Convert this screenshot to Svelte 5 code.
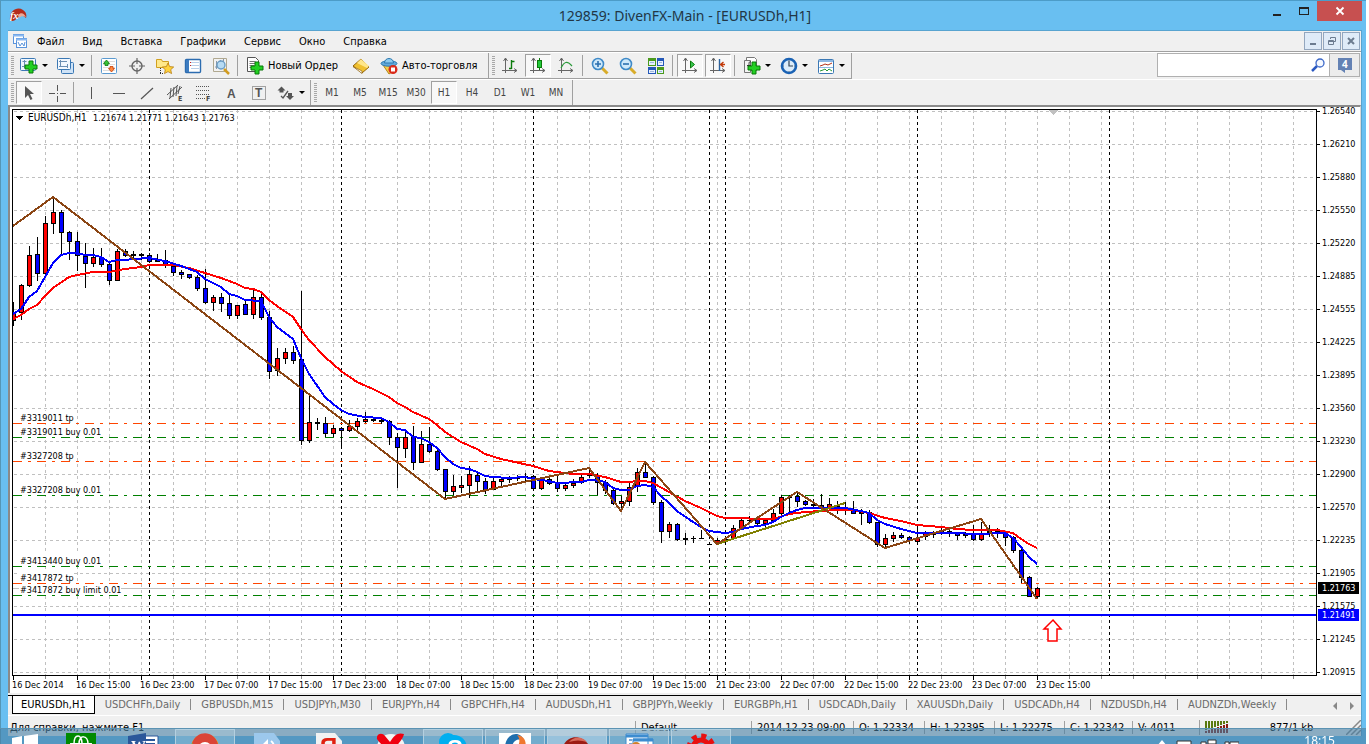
<script>
	let chartWidth = $state(1350)
	let chartHeight = $state(586)
	let search = $state('')
	let activeTab = $state(0)
	let period = $state('H1')

	const menus = ['Файл', 'Вид', 'Вставка', 'Графики', 'Сервис', 'Окно', 'Справка']
	const periods = ['M1', 'M5', 'M15', 'M30', 'H1', 'H4', 'D1', 'W1', 'MN']

	const tabs = [
		'EURUSDh,H1', 'USDCHFh,Daily', 'GBPUSDh,M15', 'USDJPYh,M30', 'EURJPYh,H4',
		'GBPCHFh,H4', 'AUDUSDh,H1', 'GBPJPYh,Weekly', 'EURGBPh,H1', 'USDCADh,Daily',
		'XAUUSDh,Daily', 'USDCADh,H4', 'NZDUSDh,H4', 'AUDNZDh,Weekly'
	]

	const prices = [
		'1.26540', '1.26210', '1.25880', '1.25550', '1.25220', '1.24885', '1.24555', '1.24225', '1.23895',
		'1.23560', '1.23230', '1.22900', '1.22570', '1.22235', '1.21905', '1.21575', '1.21245', '1.20915'
	]

	const times = [
		'16 Dec 2014', '16 Dec 15:00', '16 Dec 23:00', '17 Dec 07:00', '17 Dec 15:00', '17 Dec 23:00',
		'18 Dec 07:00', '18 Dec 15:00', '18 Dec 23:00', '19 Dec 07:00', '19 Dec 15:00', '21 Dec 23:00',
		'22 Dec 07:00', '22 Dec 15:00', '22 Dec 23:00', '23 Dec 07:00', '23 Dec 15:00'
	]

	const days = [149, 341, 533, 709, 725, 917, 1109]

	const orders = [
		{ y: 423, text: '#3319011 tp', kind: 'tp', w: 54 },
		{ y: 437, text: '#3319011 buy 0.01', kind: 'buy', w: 82 },
		{ y: 461, text: '#3327208 tp', kind: 'tp', w: 54 },
		{ y: 495, text: '#3327208 buy 0.01', kind: 'buy', w: 82 },
		{ y: 566, text: '#3413440 buy 0.01', kind: 'buy', w: 82 },
		{ y: 583, text: '#3417872 tp', kind: 'tp', w: 54 },
		{ y: 595, text: '#3417872 buy limit 0.01', kind: 'buy', w: 102 }
	]

	// one bar every 8px: high, low, body top, body bottom, up
	const bars = [
		[302, 326, 313, 321, 1], [284, 320, 285, 313, 1], [246, 287, 255, 286, 1], [237, 281, 254, 274, 0],
		[216, 274, 223, 274, 1], [197, 234, 212, 224, 1], [210, 256, 212, 233, 0], [231, 260, 232, 242, 0],
		[232, 271, 241, 256, 0], [243, 288, 256, 264, 0], [248, 267, 257, 264, 1], [248, 267, 257, 265, 0],
		[263, 285, 264, 281, 0], [249, 281, 251, 281, 1], [249, 257, 251, 256, 0], [251, 259, 254, 256, 0],
		[253, 260, 254, 256, 0], [253, 262, 255, 262, 0], [254, 262, 260, 262, 0], [250, 268, 260, 265, 0],
		[265, 276, 266, 273, 0], [270, 279, 272, 275, 0], [274, 279, 274, 278, 0], [275, 291, 277, 289, 0],
		[269, 304, 288, 303, 0], [295, 311, 297, 303, 1], [293, 312, 297, 304, 0], [295, 319, 303, 316, 0],
		[305, 319, 305, 316, 1], [300, 315, 304, 315, 0], [290, 319, 297, 315, 1], [294, 320, 297, 318, 0],
		[311, 379, 317, 372, 0], [348, 376, 358, 371, 1], [348, 364, 352, 359, 1], [346, 364, 352, 361, 0],
		[291, 445, 359, 441, 0], [393, 443, 422, 441, 1], [418, 430, 422, 424, 0], [417, 437, 423, 434, 0],
		[425, 437, 428, 434, 1], [427, 447, 428, 431, 0], [420, 432, 426, 431, 1], [418, 430, 421, 427, 1],
		[412, 423, 419, 422, 1], [418, 422, 419, 421, 0], [419, 424, 420, 422, 0], [420, 445, 421, 438, 0],
		[433, 488, 437, 448, 0], [431, 458, 437, 449, 1], [426, 470, 437, 463, 0], [431, 463, 444, 463, 1],
		[427, 453, 444, 452, 0], [448, 471, 451, 470, 0], [469, 499, 469, 492, 0], [475, 495, 486, 492, 1],
		[476, 493, 485, 488, 1], [466, 498, 474, 486, 1], [473, 491, 475, 482, 0], [478, 494, 481, 490, 0],
		[477, 490, 481, 490, 1], [477, 486, 479, 482, 1], [476, 483, 478, 480, 0], [475, 481, 477, 479, 0],
		[473, 481, 476, 478, 0], [475, 489, 476, 489, 0], [478, 490, 480, 489, 1], [477, 485, 479, 484, 0],
		[475, 492, 482, 489, 0], [483, 491, 485, 489, 1], [479, 488, 483, 486, 1], [475, 484, 477, 483, 1],
		[467, 478, 474, 476, 1], [473, 495, 475, 483, 0], [480, 494, 482, 491, 0], [488, 505, 490, 504, 0],
		[496, 510, 501, 504, 1], [483, 506, 487, 502, 1], [468, 492, 472, 487, 1], [462, 478, 472, 478, 0],
		[476, 505, 477, 503, 0], [500, 543, 502, 532, 0], [522, 538, 524, 532, 1], [523, 541, 524, 540, 0],
		[533, 545, 538, 540, 0], [536, 543, 538, 539, 0], [530, 539, 538, 539, 0], [542, 545, 544, 545, 0],
		[538, 544, 540, 544, 1], [536, 543, 539, 542, 1], [525, 539, 528, 539, 1], [519, 529, 520, 529, 1],
		[516, 522, 520, 521, 0], [518, 525, 519, 524, 0], [518, 529, 520, 524, 1], [509, 522, 513, 521, 1],
		[495, 516, 497, 514, 1], [495, 514, 497, 498, 0], [492, 507, 496, 502, 0], [500, 506, 501, 505, 0],
		[499, 507, 504, 506, 0], [494, 510, 505, 509, 0], [498, 510, 504, 509, 1], [501, 514, 506, 510, 1],
		[502, 515, 507, 509, 0], [501, 514, 509, 514, 0], [509, 525, 512, 514, 0], [510, 524, 512, 523, 0],
		[522, 547, 522, 545, 0], [534, 547, 538, 545, 1], [532, 542, 535, 539, 1], [533, 539, 535, 538, 0],
		[536, 544, 537, 541, 0], [524, 542, 538, 542, 1], [531, 540, 533, 537, 1], [531, 538, 533, 535, 0],
		[526, 535, 531, 533, 0], [529, 537, 531, 533, 0], [532, 540, 533, 536, 0], [532, 538, 534, 536, 0],
		[525, 541, 533, 540, 0], [522, 541, 533, 540, 1], [525, 537, 531, 533, 0], [528, 538, 531, 533, 0],
		[532, 546, 533, 538, 0], [536, 553, 537, 551, 0], [549, 583, 550, 578, 0], [576, 597, 577, 597, 0],
		[587, 599, 588, 597, 1]
	]

	const fast = '13,314 21,309 29,297 37,291 45,277 53,263 61,255 69,253 77,253 85,255 93,255 101,257 109,262 117,260 125,260 133,259 149,258 165,261 181,266 189,269 197,272 205,279 221,287 229,294 237,296 245,300 261,301 269,317 277,327 293,339 301,358 309,374 325,397 333,404 341,410 349,414 365,417 381,418 389,422 397,429 405,430 413,437 421,438 429,442 437,448 445,457 453,464 461,468 469,469 477,472 485,476 493,477 509,478 525,477 533,479 549,481 557,483 581,482 589,480 597,480 605,482 613,488 621,490 629,490 637,486 645,485 653,487 661,496 669,503 677,511 693,522 701,527 709,531 717,532 725,533 733,532 741,529 757,526 765,525 773,522 781,517 789,513 797,510 805,508 845,508 861,511 869,513 877,520 885,524 901,529 917,533 957,533 973,534 1005,533 1013,538 1021,547 1029,557 1037,564'
	const slow = '13,319 21,315 29,309 37,305 45,296 53,288 69,277 77,275 93,272 109,272 125,269 141,267 149,265 173,265 189,268 205,273 221,278 237,284 245,288 253,289 261,292 269,300 277,306 293,317 301,329 309,340 325,357 341,371 357,382 373,389 389,397 397,403 405,407 413,412 429,419 437,425 445,432 461,442 477,449 485,454 501,459 533,466 549,471 573,474 589,474 605,477 621,482 645,481 653,483 669,492 685,501 701,508 717,516 725,518 773,519 789,514 805,512 837,510 853,510 869,513 885,518 901,521 917,525 941,527 957,529 973,530 997,530 1013,533 1021,539 1029,544 1037,548'
	const zigzag = '13,226 53,197 445,499 589,468 621,511 645,462 717,544 797,492 885,548 981,519 1037,599'

	let right = $derived(10 + chartWidth - 44)
	let bottom = $derived(107 + chartHeight - 18)
	let columns = $derived(Math.floor((right - 45) / 32) + 1)

	const tools = [
		[{ i: 'newChart', t: 'Новый график', drop: true }, { i: 'profiles', t: 'Профили', drop: true }],
		[{ i: 'market', t: 'Обзор рынка' }, { i: 'target', t: 'Окно данных' }, { i: 'navigator', t: 'Навигатор' },
			{ i: 'terminal', t: 'Терминал' }, { i: 'tester', t: 'Тестер стратегий' }],
		[{ i: 'order', t: 'Новый Ордер', label: true }, { i: 'gold', t: 'MetaEditor' }, { i: 'auto', t: 'Авто-торговля', label: true }]
	]
	const chartTools = [
		[{ i: 'bars', t: 'Бары' }, { i: 'candles', t: 'Свечи', on: true }, { i: 'line', t: 'Линия' }],
		[{ i: 'zoomIn', t: 'Увеличить' }, { i: 'zoomOut', t: 'Уменьшить' }, { i: 'tile', t: 'Мозаика' }],
		[{ i: 'scroll', t: 'Автопрокрутка', on: true }, { i: 'shift', t: 'Сдвиг графика', on: true }],
		[{ i: 'indicators', t: 'Индикаторы', drop: true }, { i: 'clock', t: 'Периоды', drop: true }, { i: 'template', t: 'Шаблоны', drop: true }]
	]
	const drawTools = [
		[{ i: 'cursor', t: 'Курсор', on: true }, { i: 'cross', t: 'Перекрестие' }],
		[{ i: 'vline', t: 'Вертикальная линия' }, { i: 'hline', t: 'Горизонтальная линия' }, { i: 'trend', t: 'Трендовая линия' },
			{ i: 'channel', t: 'Канал' }, { i: 'fibo', t: 'Фибоначчи' }, { i: 'text', t: 'Текст' },
			{ i: 'label', t: 'Метка' }, { i: 'arrows', t: 'Стрелки', drop: true }]
	]

	const status = [
		['Default', 116], ['2014.12.23 09:00', 102], ['O: 1.22334', 71], ['H: 1.22395', 70],
		['L: 1.22275', 70], ['C: 1.22342', 68], ['V: 4011', 67]
	]
	const taskbar = ['store', 'word', 'chrome', 'sound', 'yandex', 'vivaldi', 'skype', 'ring', 'fx', 'files', 'gear']
	const running = ['chrome', 'skype', 'ring', 'fx', 'files', 'gear']
</script>

{#snippet plus(x, y)}
	<path d="M{x + 4} {y}h4v4h4v4h-4v4h-4v-4h-4v-4h4z" fill="#22d022" stroke="#087808" />
{/snippet}

{#snippet axes()}
	<path d="M4.5 1v15M1 13.5h15M2.5 4l2-3 2 3M13 11.5l3 2-3 2" fill="none" stroke="#666" />
{/snippet}

{#snippet icon(name)}
	<svg class="icon" width="18" height="18" viewBox="0 0 18 18" aria-hidden="true">
		{#if name === 'newChart'}
			<rect x=".5" y="1.5" width="15" height="12" rx="1" fill="#eef6ff" stroke="#3b78b4" />
			<path d="M4.5 3v8M2 9.5h9M2.5 4.5h4" stroke="#6c8fb4" fill="none" />
			{@render plus(5, 4)}
		{:else if name === 'profiles'}
			<rect x="4.5" y="5.5" width="12" height="11" rx="1" fill="#cfe3f7" stroke="#3b78b4" />
			<rect x=".5" y="1.5" width="13" height="11" rx="1" fill="#f2f8ff" stroke="#3b78b4" />
			<path d="M3.5 3v7M2 4.5h8M2 9.5h9M10.5 7v4" stroke="#6c8fb4" fill="none" />
		{:else if name === 'market'}
			<rect x="1.5" y="1.5" width="15" height="15" rx="1" fill="#fff" stroke="#5b9ad0" />
			<path d="M3 4.5h12M3 7.5h12M3 10.5h12M3 13.5h12" stroke="#ddd" />
			<path d="M6.5 3L9.500 6.500h-1.500v2h-3v-2H3.500z" fill="#38c238" stroke="#0a7a0a" stroke-width=".8" />
			<path d="M11.500 15l3-3.500h-1.500v-2h-3v2H8.500z" fill="#ff8a40" stroke="#c8400a" stroke-width=".8" />
		{:else if name === 'target'}
			<circle cx="9" cy="9" r="5" fill="none" stroke="#666" stroke-width="1.4" />
			<path d="M9 1v6M9 11v6M1 9h6M11 9h6" stroke="#666" stroke-width="1.2" />
		{:else if name === 'navigator'}
			<path d="M.5 2.5h5l1 2h6v6h-12z" fill="#ffe88a" stroke="#d0a020" />
			<path d="M4.5 11v5M4 16.5h4" stroke="#333" stroke-dasharray="1 1" />
			<path d="M12 6l1.700 3.600 4 .4-3 2.700.9 3.900-3.600-2-3.500 2 .8-3.900-2.900-2.700 4-.4z" fill="#ffd23c" stroke="#b87e10" stroke-width=".8" />
		{:else if name === 'terminal'}
			<rect x="1.5" y="2.5" width="15" height="13" rx="1" fill="#fff" stroke="#2c6cb0" stroke-width="1.4" />
			<path d="M2 3h3v12h-3z" fill="#3d7cc0" />
			<path d="M7 5.5h8M7 8.5h8M7 11.5h8" stroke="#b8cfe8" />
			<path d="M6 5.5h1M6 8.5h1" stroke="#c22" />
		{:else if name === 'tester'}
			<path d="M1.5 1.5h13v13h-13z" fill="#f2f2f2" stroke="#b0a890" />
			<path d="M4.5 4v8M8.5 3v5M11.5 2v6M3 10h6" stroke="#8a98a8" />
			<circle cx="9" cy="8" r="4" fill="#b7dbf3" stroke="#6a9cc4" stroke-width="1.4" />
			<path d="M12 12l5 5" stroke="#d29c20" stroke-width="2.5" />
		{:else if name === 'order'}
			<path d="M1.5.5h8l3 3v11h-11z" fill="#fff" stroke="#555" />
			<path d="M3.5 4.5h6M3.5 6.5h6M3.5 8.5h5M3.5 10.5h4" stroke="#777" />
			{@render plus(5, 5)}
		{:else if name === 'gold'}
			<path d="M1 9l8-7 8 8-7 6z" fill="#f0c030" stroke="#94640a" />
			<path d="M5 6l4-4 8 7-2 2z" fill="#ffe68a" />
			<path d="M1 9.500l9 4.500v2.500z" fill="#fff" stroke="#94640a" stroke-width=".7" />
		{:else if name === 'auto'}
			<path d="M3 8l6 9 6-4V8z" fill="#f5cf4a" stroke="#b48418" />
			<ellipse cx="9" cy="6.5" rx="8" ry="2.7" fill="#62a9da" stroke="#2c79b0" />
			<path d="M4.5 6c0-6 9-6 9 0z" fill="#8ecbef" stroke="#2c79b0" />
			<circle cx="13" cy="12.5" r="4.5" fill="#da2a1a" />
			<rect x="11" y="10.5" width="4" height="4" fill="#fff" />
		{:else if name === 'bars'}
			{@render axes()}
			<path d="M10.5 3v9M8 11.5h2.500M10.500 4.500h3" stroke="#0a7a0a" fill="none" stroke-width="1.4" />
		{:else if name === 'candles'}
			{@render axes()}
			<path d="M10.5 1v12" stroke="#0a7a0a" />
			<rect x="8.5" y="3.5" width="4" height="7" fill="#22c83a" stroke="#0a7a0a" />
		{:else if name === 'line'}
			{@render axes()}
			<path d="M4 11c3-6 6-8 11-2" stroke="#2a9a3a" fill="none" stroke-width="1.2" />
		{:else if name === 'zoomIn' || name === 'zoomOut'}
			<path d="M11 11l5.5 5.5" stroke="#d8ac2a" stroke-width="3" />
			<circle cx="7" cy="7" r="5.5" fill="#cfe9fa" stroke="#3f8ac8" stroke-width="1.6" />
			<path d={name === 'zoomIn' ? 'M4 7h6M7 4v6' : 'M4 7h6'} stroke="#2c70b0" stroke-width="1.6" />
		{:else if name === 'tile'}
			<path d="M1 1h8v8H1zM10 10h7v7h-7z" fill="#4a9a1c" />
			<path d="M10 1h7v8h-7zM1 10h8v7H1z" fill="#2458b8" />
			<path d="M2 4h6v4H2zM11 4h5v4h-5zM2 13h6v3H2zM11 13h5v3h-5z" fill="#e8f0ff" />
			<path d="M3 5.5h4M12 5.5h3M3 14.5h4M12 14.5h3" stroke="#9fb8da" />
		{:else if name === 'scroll'}
			{@render axes()}
			<path d="M9.5 4v7l4-3.5z" fill="#38c850" stroke="#0a7a0a" />
		{:else if name === 'shift'}
			{@render axes()}
			<path d="M10.5 2v12" stroke="#2a64a0" stroke-width="1.4" />
			<path d="M16 7.5h-4M14.5 5l-3 2.500 3 2.500" stroke="#c23a0a" fill="none" stroke-width="1.4" />
		{:else if name === 'indicators'}
			<path d="M3.5.5h8l2 2v11h-10z" fill="#fff" stroke="#777" />
			<path d="M1.5 3.5h6v12h-6z" fill="#f4f4f4" stroke="#777" />
			<path d="M8 5c-2-1-2 1-2 3v5M4 8.5h4" stroke="#333" fill="none" />
			{@render plus(5, 5)}
		{:else if name === 'clock'}
			<circle cx="9" cy="9" r="7" fill="#dcecfa" stroke="#1a62b4" stroke-width="2.6" />
			<path d="M9 4v5h4" stroke="#345" fill="none" stroke-width="1.2" />
			<path d="M9 3v1M9 14v1M3 9h1M14 9h1" stroke="#678" />
		{:else if name === 'template'}
			<rect x="1.5" y="2.5" width="15" height="14" rx="1" fill="#fff" stroke="#3b78b4" />
			<path d="M2 3h14v2H2z" fill="#8db8e4" />
			<path d="M3 9l3-1 2-1 3 1 4-2" stroke="#b23018" fill="none" />
			<path d="M2 10.5h14" stroke="#8db8e4" />
			<path d="M3 14l3-1 2-1 2 2 2-2 3 2" stroke="#289a38" fill="none" />
		{:else if name === 'cursor'}
			<path d="M5 2v12l3-3 2.500 5 2-1-2.500-5h4z" fill="#555" />
		{:else if name === 'cross'}
			<path d="M9.5 1v6M9.5 12v6M1 9.5h6M12 9.5h6M9 9.5h1" stroke="#555" />
		{:else if name === 'vline'}
			<path d="M9.5 3v12" stroke="#555" />
		{:else if name === 'hline'}
			<path d="M3 9.5h12" stroke="#555" />
		{:else if name === 'trend'}
			<path d="M3 15L15 4" stroke="#555" stroke-width="1.2" />
		{:else if name === 'channel'}
			<path d="M1 11L12 1M3 15L16 3M5 4l-1 10M8 3L7 13M11 2l-1 10M14 2l-2 8" stroke="#555" />
			<text x="12" y="17" class="mark">E</text>
		{:else if name === 'fibo'}
			<path d="M2 2.5h14M2 6.5h14M2 10.5h14M2 14.5h9" stroke="#555" stroke-dasharray="1 1" />
			<text x="12" y="17" class="mark">F</text>
		{:else if name === 'text'}
			<text x="5" y="14" class="glyph">A</text>
		{:else if name === 'label'}
			<rect x="2.5" y="2.5" width="13" height="13" fill="none" stroke="#555" stroke-dasharray="1 1" />
			<text x="5" y="13" class="glyph">T</text>
		{:else if name === 'arrows'}
			<path d="M4.5 2.5l4 4h-2v2h-4v-2H.5zM13 16l4-4h-2V9h-4v3H9z" fill="#555" />
			<path d="M4 12l2 2 5-7" stroke="#555" fill="none" stroke-width="1.3" />
		{:else if name === 'fx'}
			<path d="M1 13C0 4 8-1 14 3c3 2 4 5 3 8-4-4-7-2-9 0-2 3-5 4-7 2z" fill="#b42c1c" />
			<path d="M9 8c3-3 6-2 8 2-3-1-5-1-7 1z" fill="#e8a898" />
			<text x="1" y="12" class="fx">fx</text>
		{/if}
	</svg>
{/snippet}

{#snippet toolGroups(groups)}
	{#each groups as group, g}
		{#if g > 0}<span class="sep"></span>{/if}
		{#each group as tool}
			<button class="tool" class:drop={tool.drop} class:labelled={tool.label} class:on={tool.on} title={tool.t} aria-label={tool.t}>
				{@render icon(tool.i)}
				{#if tool.label}<span>{tool.t}</span>{/if}
				{#if tool.drop}<i class="caret"></i>{/if}
			</button>
		{/each}
	{/each}
{/snippet}

<div class="window">
	<header class="titlebar">
		<span class="app-icon">{@render icon('fx')}</span>
		<span class="title">129859: DivenFX-Main - [EURUSDh,H1]</span>
		<div class="win-buttons">
			<button aria-label="Свернуть"><svg width="10" height="10"><path d="M1 8h8v2H1z" fill="#222" /></svg></button>
			<button aria-label="Развернуть"><svg width="10" height="10"><path d="M0 1h10v8H0zM1 3v5h8V3z" fill="#222" fill-rule="evenodd" /></svg></button>
			<button class="close" aria-label="Закрыть"><svg width="10" height="10"><path d="M1.5 1.5l7 7M8.5 1.5l-7 7" stroke="#fff" stroke-width="1.8" /></svg></button>
		</div>
	</header>

	<main class="client">
		<nav class="menubar">
			<svg width="16" height="16" class="doc-icon" aria-hidden="true">
				<rect x="1.5" y="1.5" width="10" height="9" fill="#fff" stroke="#5a94dc" />
				<rect x="4.5" y="5.5" width="10" height="9" fill="#fff" stroke="#5a94dc" />
				<path d="M1 2.5h11M4 6.5h11" stroke="#8ab8f0" stroke-width="2" />
				<path d="M6 9l2 4 2-3 2 3 1-4" fill="none" stroke="#5a94dc" />
			</svg>
			{#each menus as item}
				<button>{item}</button>
			{/each}
			<div class="mdi">
				<button aria-label="Свернуть окно"><svg width="10" height="10"><path d="M2 7h6v2H2z" fill="#6c7c90" /></svg></button>
				<button aria-label="Восстановить окно"><svg width="10" height="10"><path d="M3.5 3V1.5h5v4H7M1.5 4.5h5v4h-5zM1 5.5h6" fill="none" stroke="#6c7c90" /></svg></button>
				<button aria-label="Закрыть окно"><svg width="10" height="10"><path d="M2 2l6 6M8 2l-6 6" stroke="#6c7c90" stroke-width="2" /></svg></button>
			</div>
		</nav>

		<div class="row first">
			<div class="toolbar">
				<span class="grip"></span>
				{@render toolGroups(tools)}
			</div>
			<div class="toolbar">
				<span class="grip"></span>
				{@render toolGroups(chartTools)}
			</div>
			<div class="search">
				<input type="text" aria-label="Поиск" bind:value={search} />
				<svg width="14" height="14" class="lens" aria-hidden="true"><path d="M1 13l5-5" stroke="#2a58c0" stroke-width="2.5" /><circle cx="9" cy="5" r="4" fill="#f4f8ff" stroke="#3c68c8" stroke-width="1.3" /></svg>
				<button aria-label="Сообщения">
					<svg width="18" height="17"><path d="M2 1h14v12H9v3l-4-3H2z" fill="#6482b4" /><text x="6" y="11" class="count">4</text></svg>
				</button>
			</div>
		</div>

		<div class="row second">
			<div class="toolbar">
				<span class="grip"></span>
				{@render toolGroups(drawTools)}
			</div>
			<div class="toolbar">
				<span class="grip"></span>
				{#each periods as p}
					<button class="tool period" class:on={p === period} onclick={() => (period = p)}>{p}</button>
				{/each}
			</div>
		</div>

		<section class="chart" bind:clientWidth={chartWidth} bind:clientHeight={chartHeight}>
			<svg width={chartWidth} height={chartHeight} viewBox="10 107 {chartWidth} {chartHeight}" shape-rendering="crispEdges">
				<defs>
					<clipPath id="plot"><rect x="13" y="110" width={right - 13} height={bottom - 110} /></clipPath>
				</defs>

				<g clip-path="url(#plot)">
					{#each prices as _, i}
						<path class="grid" d="M14 {111.5 + 33 * i}H{right}" />
					{/each}
					{#each { length: columns } as _, i}
						<path class="grid" d="M{45.5 + 32 * i} 110V{bottom}" />
					{/each}
					{#each days as x}
						<path class="day" d="M{x + 0.5} 110V{bottom}" />
					{/each}
					<path class="bid" d="M13 588.5H{right}" />

					{#each orders as o}
						<rect x="19" y={o.y - 12} width={o.w} height="12" fill="#fff" />
					{/each}
					{#each orders as o}
						<path class="order {o.kind}" d="M13 {o.y + 0.5}H{right}" />
					{/each}

					{#each bars as [high, low, top, base, up], i}
						<rect x={13 + 8 * i} y={high} width="1" height={low - high} />
						<rect x={11 + 8 * i} y={top} width="5" height={base - top} />
						{#if base - top > 2}
							<rect x={12 + 8 * i} y={top + 1} width="3" height={base - top - 2} fill={up ? '#f00' : '#00f'} />
						{/if}
					{/each}

					<polyline points={slow} stroke="#f00" />
					<polyline points={fast} stroke="#00f" />
					<polyline points="717,544 845,503" stroke="#808000" />
					<polyline points={zigzag} stroke="#8b4513" />
					<path d="M13 615H{right}" stroke="#00f" stroke-width="2" />
					<path d="M1049 110h9l-4.5 5z" fill="#c0c0c0" />
				</g>

				<path d="M1053 620l8 9h-4v12h-9v-12h-4z" fill="#fff" stroke="#f00" stroke-width="1.5" shape-rendering="auto" />

				<g class="label">
					{#each orders as o}
						<text x="20" y={o.y - 2}>{o.text}</text>
					{/each}
				</g>
				<path d="M16 116h7l-3.5 4z" />
				<text x="28" y="121" class="symbol">EURUSDh,H1</text>
				<text x="93" y="121" class="label">1.21674 1.21771 1.21643 1.21763</text>

				<path d="M12.5 {bottom}V109.5H{right + 0.5}V{bottom + 0.5}H12" fill="none" stroke="#000" />

				{#each prices as price, i}
					<path d="M{right} {111.5 + 33 * i}h4" stroke="#000" />
					<text x={right + 6} y={114 + 33 * i} class="label">{price}</text>
				{/each}
				<rect x={right + 2} y="582" width="41" height="12" />
				<text x={right + 6} y="591" class="label" fill="#fff">1.21763</text>
				<rect x={right + 2} y="609" width="41" height="12" fill="#00f" />
				<text x={right + 6} y="618" class="label" fill="#fff">1.21491</text>

				{#each { length: columns } as _, i}
					<path d="M{45.5 + 32 * i} {bottom + 1}v3" stroke="#888" />
				{/each}
				{#each times as time, i}
					<path d="M{13.5 + 64 * i} {bottom + 1}v4" stroke="#000" />
					<text x={12 + 64 * i} y={bottom + 13} class="label">{time}</text>
				{/each}
			</svg>
		</section>

		<nav class="tabs">
			{#each tabs as tab, i}
				<button class:active={i === activeTab} onclick={() => (activeTab = i)}>{tab}</button>
			{/each}
			<span class="tab-scroll">
				<button aria-label="Назад"><svg width="8" height="8"><path d="M6 0v8L2 4z" fill="#888" /></svg></button>
				<button aria-label="Вперёд"><svg width="8" height="8"><path d="M2 0v8l4-4z" fill="#888" /></svg></button>
			</span>
		</nav>

		<footer class="status">
			<span class="help">Для справки, нажмите F1</span>
			{#each status as [text, width]}
				<span class="cell" style="width: {width}px">{text}</span>
			{/each}
			<span class="cell traffic">
				<svg width="24" height="12" shape-rendering="crispEdges" aria-hidden="true">
					{#each { length: 8 } as _, i}
						<rect x={i * 3} y="0" width="2" height={9 - i} fill="#5a7a10" />
						<rect x={i * 3} y={10 - i} width="2" height={2 + i} fill="#8a1c10" />
					{/each}
				</svg>
				<span>877/1 kb</span>
				<svg class="resize" width="15" height="15" aria-hidden="true"><path d="M0 15L15 0M5 15L15 5M10 15l5-5" stroke="#888" stroke-width="1.5" /></svg>
			</span>
		</footer>
	</main>
</div>

<div class="taskbar">
	<button class="start" aria-label="Пуск">
		<svg width="28" height="26"><path d="M1 4l10-2v10H1zM13 2l14-2v12H13zM1 14h10v9L1 22zM13 14h14v12l-14-2z" fill="#fff" /></svg>
	</button>
	{#each taskbar as app}
		<button class:running={running.includes(app)} class:current={app === 'fx'} aria-label={app}>
			<svg width="32" height="32">
				{#if app === 'store'}
					<path d="M1 0h30v26H1z" fill="#008a00" />
					<path d="M5 10h22l-2 14H7z" fill="#fff" />
					<path d="M9 11c0-11 8-10 8-1M14 11c0-10 9-9 9 0" stroke="#fff" stroke-width="1.5" fill="none" />
				{:else if app === 'word'}
					<path d="M14 3h17v24H14z" fill="#fff" stroke="#2b579a" />
					<path d="M17 7h11M17 11h11" stroke="#2b579a" stroke-width="2" />
					<path d="M1 3l18-3v30L1 27z" fill="#2b579a" />
					<text x="4" y="18" class="word">W</text>
				{:else if app === 'chrome'}
					<circle cx="16" cy="15" r="14" fill="#f4c20d" />
					<path d="M3 10C8-3 25-3 29 11H16l-6 6z" fill="#db4437" />
					<path d="M3 10l7 11 5 8C3 27 0 17 3 10z" fill="#0f9d58" />
					<circle cx="16" cy="16" r="7" fill="#fff" /><circle cx="16" cy="16" r="5" fill="#4285f4" />
				{:else if app === 'sound'}
					<path d="M3 0h20l6 8v20H3z" fill="#9cc8ec" />
					<path d="M12 11l5-5v16l-5-5H8v-6z" fill="#fff" />
					<path d="M20 8c4 3 4 9 0 12" fill="none" stroke="#fff" stroke-width="2" />
				{:else if app === 'yandex'}
					<path d="M3 0h19l7 8v20H3z" fill="#f2f2f2" />
					<text x="7" y="22" class="ya">Я</text>
				{:else if app === 'vivaldi'}
					<circle cx="16" cy="15" r="14" fill="#f4f4f4" />
					<path d="M2 6C1 1 7-1 10 3l5 6c4-7 8-10 14-8-1 6-9 12-12 20C13 17 5 11 2 6z" fill="#f00010" />
				{:else if app === 'skype'}
					<circle cx="11" cy="9" r="9" fill="#00aff0" /><circle cx="17" cy="15" r="13" fill="#00aff0" />
					<text x="10" y="24" class="skype">S</text>
				{:else if app === 'ring'}
					<path d="M0-1h32v30H0z" fill="#fff" />
					<path d="M6 16C5 0 22-4 25 8c-7-4-12 0-13 10z" fill="#1f6fae" />
					<path d="M18 2c9 1 11 10 6 17l-5-6c2-4 2-8-1-11z" fill="#f07830" />
				{:else if app === 'fx'}
					<path d="M1 20C1 0 26-2 31 20z" fill="#9c1c14" />
					<path d="M8 9c5-6 13-6 18 0-6-2-12-2-18 0z" fill="#d86a5c" />
				{:else if app === 'files'}
					<path d="M3 1h22v18H3zM10 6h20v18H10z" fill="#fff" stroke="#3c8cd0" />
					<path d="M3 3h22M10 7h20" stroke="#3c8cd0" stroke-width="3" />
					<path d="M6 7h3M6 11h3M13 12h4M20 12h6" stroke="#7aa8d8" stroke-width="2" />
					<circle cx="13" cy="14" r="5" fill="#d0802a" />
				{:else}
					<circle cx="16" cy="15" r="12" fill="none" stroke="#e81010" stroke-width="5" stroke-dasharray="5 4.4" />
					<circle cx="16" cy="15" r="8" fill="none" stroke="#e81010" stroke-width="5" />
				{/if}
			</svg>
		</button>
	{/each}
	<div class="tray">
		<svg width="84" height="20" aria-hidden="true">
			<path d="M2 12l5-6 5 6z" fill="#fff" />
			<path d="M22 7h14v11H22zM46 8h5v10h-5zM53 6h8v4h-8zM70 8h4v9h-4zM75 8h9v3h-9z" fill="#fff" stroke="#333" />
		</svg>
		<time>18:15</time>
	</div>
</div>

<style>
	:global(body) {
		background: #fff;
		overflow: hidden;
	}

	button {
		font: inherit;
		color: inherit;
		background: none;
		border: 0;
		padding: 0;
		display: flex;
		align-items: center;
		justify-content: center;
		white-space: nowrap;
	}

	.window {
		box-sizing: border-box;
		height: 100vh;
		margin-right: 3px;
		padding: 0 4px 8px 7px;
		background: #69bff1;
		border-top: 1px solid #4c9cc8;
		border-left: 1px solid #5596b6;
		display: flex;
		flex-direction: column;
		font-family: "DejaVu Sans Condensed", "Noto Sans", sans-serif;
		font-size: 11px;
		color: #000;
	}

	.titlebar {
		display: grid;
		grid-template-columns: 1fr auto 1fr;
		height: 29px;
	}

	.app-icon {
		padding: 6px 0 0 1px;
	}

	.title {
		font: 14px/29px "Noto Sans", sans-serif;
		color: #223645;
	}

	.win-buttons {
		display: flex;
		justify-content: flex-end;
		height: 20px;
	}

	.win-buttons button {
		width: 27px;
	}

	.win-buttons .close {
		width: 45px;
		background: #c75050;
	}

	.client {
		flex: 1;
		min-height: 0;
		display: flex;
		flex-direction: column;
		background: #f0f0f0;
		border-top: 1px solid #58a4d0;
		border-right: 1px solid #58a4d0;
	}

	.menubar {
		display: flex;
		align-items: center;
		gap: 18px;
		height: 20px;
		padding-left: 4px;
		border-bottom: 1px solid #a0a0a0;
	}

	.doc-icon {
		margin-right: -9px;
	}

	.mdi {
		display: flex;
		gap: 1px;
		margin-left: auto;
		padding-right: 1px;
	}

	.mdi button {
		box-sizing: border-box;
		width: 18px;
		height: 18px;
		background: #dfebf8;
		border: 1px solid #93a6be;
	}

	.row {
		display: flex;
		box-sizing: border-box;
	}

	.first {
		height: 28px;
		border-top: 1px solid #fff;
		border-bottom: 1px solid #fff;
	}

	.second {
		height: 25px;
	}

	.toolbar {
		display: flex;
		align-items: center;
		gap: 2px;
		padding: 0 3px;
		border-right: 1px solid #a0a0a0;
		border-bottom: 1px solid #a0a0a0;
	}

	.second .toolbar {
		border-bottom: 0;
	}

	.grip {
		width: 3px;
		height: 19px;
		background: repeating-linear-gradient(#a8a8a8 0 1px, #f0f0f0 1px 2px);
	}

	.sep {
		width: 1px;
		height: 21px;
		margin: 0 2px 0 1px;
		background: #a0a0a0;
	}

	.tool {
		box-sizing: border-box;
		width: 26px;
		height: 23px;
		border: 1px solid transparent;
	}

	.tool.on {
		border-color: #a0a0a0 #fff #fff #a0a0a0;
		background: #f8f8f8;
	}

	.tool.drop {
		width: 35px;
		gap: 4px;
	}

	.second .drop {
		width: 33px;
	}

	.tool.labelled {
		width: auto;
		padding: 0 7px 0 3px;
		gap: 4px;
	}

	.period {
		font-size: 10px;
		color: #444;
	}

	.icon {
		flex: none;
	}

	.caret {
		border: 3px solid transparent;
		border-top-color: #000;
		border-bottom: 0;
	}

	.mark {
		font: bold 7px "DejaVu Sans Condensed", sans-serif;
		fill: #444;
	}

	.glyph {
		font: bold 12px "Liberation Sans", sans-serif;
		fill: #555;
	}

	.fx {
		font: italic bold 10px "Liberation Serif", serif;
		fill: #fff;
	}

	.search {
		display: flex;
		position: relative;
		box-sizing: border-box;
		width: 203px;
		height: 24px;
		margin-left: auto;
		margin-right: 1px;
		border: 1px solid #b0b0b0;
	}

	.search input {
		flex: 1;
		min-width: 0;
		padding: 0 24px 0 4px;
		border: 0;
		border-right: 1px solid #b0b0b0;
		font: inherit;
		background: #fff;
	}

	.search button {
		width: 29px;
		background: #ececec;
	}

	.lens {
		position: absolute;
		right: 34px;
		top: 4px;
	}

	.count {
		font: bold 10px "Noto Sans", sans-serif;
		fill: #fff;
	}

	.chart {
		flex: 1;
		min-height: 0;
		overflow: hidden;
		margin-bottom: 2px;
		background: #fff;
		border-top: 2px solid #8a8a8a;
		border-left: 2px solid #8a8a8a;
		border-right: 1px solid #d8d8d8;
	}

	.chart svg {
		display: block;
	}

	.label {
		font-size: 9px;
	}

	.symbol {
		font-size: 10px;
	}

	.grid {
		stroke: #c0c0c0;
		stroke-dasharray: 3 3;
	}

	.day {
		stroke: #000;
		stroke-dasharray: 3 3;
	}

	.bid {
		stroke: #c0c0c0;
	}

	.order {
		stroke-dasharray: 9 6 3 6;
	}

	.tp {
		stroke: #ff4500;
	}

	.buy {
		stroke: #008000;
	}

	polyline {
		fill: none;
		stroke-width: 2;
	}

	.tabs {
		display: flex;
		height: 19px;
		padding-left: 4px;
		border-top: 1px solid #000;
		color: #6a6a6a;
	}

	.tabs > button {
		height: 17px;
		padding: 0 11px 0 10px;
		background: linear-gradient(#8a8a8a, #8a8a8a) right 3px / 1px 11px no-repeat;
	}

	.tabs > .active {
		height: 18px;
		padding: 0 8px;
		color: #000;
		background: #fff;
		border: 1px solid #000;
		border-top: 0;
	}

	.tab-scroll {
		display: flex;
		gap: 9px;
		margin-left: auto;
		padding-right: 5px;
	}

	.status {
		display: flex;
		align-items: center;
		box-sizing: border-box;
		height: 21px;
		padding-top: 2px;
		border-top: 1px solid #fff;
		white-space: nowrap;
	}

	.help {
		flex: 1;
		padding-left: 2px;
	}

	.cell {
		box-sizing: border-box;
		padding-left: 5px;
		border-left: 1px solid #a0a0a0;
	}

	.traffic {
		display: flex;
		align-items: center;
		justify-content: space-between;
		width: 162px;
	}

	.traffic span {
		margin-left: 8px;
	}

	.resize {
		align-self: flex-end;
	}

	.taskbar {
		position: fixed;
		left: 0;
		right: 3px;
		bottom: 0;
		height: 15px;
		overflow: hidden;
		display: flex;
		align-items: flex-start;
		gap: 2px;
		background: rgba(70, 127, 163, .6);
		border-top: 1px solid #5b93b3;
	}

	.taskbar button {
		box-sizing: border-box;
		width: 60px;
		height: 40px;
		padding-top: 4px;
		flex: none;
		align-items: flex-start;
	}

	.taskbar .start {
		width: 49px;
		padding-top: 5px;
	}

	.taskbar .running {
		padding-top: 3px;
		border: 1px solid #b4d0e0;
		background: rgba(190, 215, 230, .3);
	}

	.taskbar .current {
		background: rgba(220, 235, 245, .5);
	}

	.word {
		font: bold 15px "Liberation Serif", serif;
		fill: #fff;
	}

	.ya {
		font: bold 24px "Liberation Sans", sans-serif;
		fill: #e02010;
	}

	.skype {
		font: bold 24px "Liberation Sans", sans-serif;
		fill: #fff;
	}

	.tray {
		display: flex;
		gap: 65px;
		margin-left: auto;
		padding-right: 31px;
		color: #fff;
		font: 12px/14px "Noto Sans", sans-serif;
	}

	.tray svg {
		margin-top: 5px;
	}

	.tray time {
		padding-top: 5px;
	}
</style>
